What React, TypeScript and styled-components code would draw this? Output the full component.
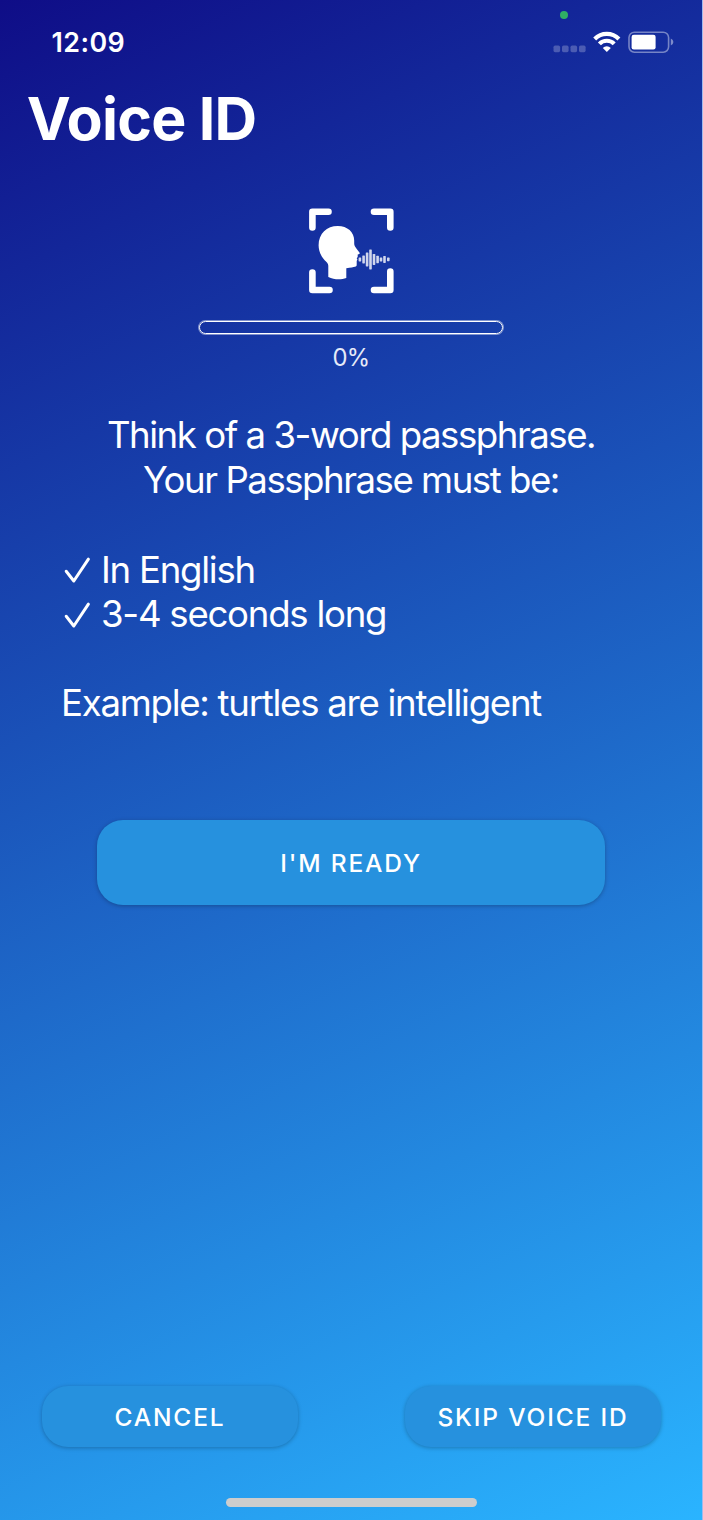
import React from "react";
import styled, { createGlobalStyle } from "styled-components";

const GlobalStyle = createGlobalStyle`
  *, *::before, *::after { box-sizing: border-box; }
  html, body { margin: 0; padding: 0; }
  body { font-family: Inter, "Liberation Sans", sans-serif; color: #fff; }
`;

const Screen = styled.main`
  width: 703px;
  height: 1520px;
  display: flex;
  flex-direction: column;
  overflow: hidden;
  border-right: 1px solid #9fb9ee;
  background: linear-gradient(155.2deg, #0f0d87 0%, #2ab4ff 100%);
  background-origin: border-box;
`;

const StatusBar = styled.header`
  position: relative;
  display: flex;
  justify-content: space-between;
  height: 84px;
  padding: 26px 28px 0 51.5px;
`;

const Clock = styled.time`
  font-size: 26.8px;
  line-height: 32px;
  font-weight: 580;
  letter-spacing: 0.45px;
`;

const CameraDot = styled.span`
  position: absolute;
  left: 560px;
  top: 11px;
  width: 8px;
  height: 8px;
  border-radius: 50%;
  background: #2fb065;
`;

const StatusIcons = styled.svg`
  display: block;
  width: 122px;
  height: 30px;
`;

const Title = styled.h1`
  margin: 0 0 54px 26.8px;
  font-size: 59px;
  line-height: 70px;
  font-weight: 700;
  letter-spacing: -0.75px;
  white-space: nowrap;
`;

const Enrollment = styled.section`
  display: flex;
  flex-direction: column;
  align-items: center;
`;

const VoiceIcon = styled.svg`
  display: block;
  width: 86px;
  height: 86px;
  margin-bottom: 27px;
`;

const ProgressTrack = styled.div`
  width: 304px;
  height: 13px;
  border: 1px solid #fff;
  border-radius: 6.5px;
  box-shadow: 0 0 0 1px rgba(255, 255, 255, 0.45);
`;

const ProgressFill = styled.div`
  height: 100%;
  border-radius: 5px;
  background: #fff;
`;

const ProgressLabel = styled.div`
  margin-top: 9px;
  font-size: 23.8px;
  line-height: 30px;
  letter-spacing: -0.8px;
  color: #e6eaf8;
`;

const Instructions = styled.section`
  margin: 40px 61px 0;
  font-size: 36.6px;
  line-height: 44.67px;
  white-space: nowrap;
`;

const Line = styled.p<{ $spacing: number; $center?: boolean }>`
  margin: 0;
  letter-spacing: ${(p) => p.$spacing}px;
  text-align: ${(p) => (p.$center ? "center" : "left")};
`;

const Checklist = styled.ul`
  list-style: none;
  margin: 45.2px 0 44.2px;
  padding: 0;
`;

const CheckItem = styled.li<{ $spacing: number }>`
  display: flex;
  align-items: center;
  gap: 10.5px;
  padding-left: 2.5px;
  letter-spacing: ${(p) => p.$spacing}px;
`;

const CheckIcon = styled.svg`
  display: block;
  width: 27px;
  height: 28px;
`;

const Button = styled.button<{ $large?: boolean }>`
  display: flex;
  align-items: center;
  justify-content: center;
  width: ${(p) => (p.$large ? 508 : 256)}px;
  height: ${(p) => (p.$large ? 85 : 61)}px;
  padding: 0;
  border: 0;
  border-radius: 26px;
  background: #2691de;
  box-shadow: 0 1px 4px rgba(0, 0, 0, 0.26);
  color: #fff;
  font: 450 24.5px/30px Inter, "Liberation Sans", sans-serif;
  letter-spacing: 1.85px;
  white-space: nowrap;
`;

const ReadyRow = styled.div`
  display: flex;
  justify-content: center;
  margin-top: 94.5px;
`;

const Footer = styled.footer`
  display: flex;
  justify-content: space-between;
  margin-top: auto;
  padding: 0 41px 0 42px;
`;

const HomeIndicator = styled.div`
  width: 251px;
  height: 8.5px;
  margin: 51px auto 13.5px;
  border-radius: 5px;
  background: #cdcdcd;
`;

const Check = () => (
  <CheckIcon viewBox="0 0 27 28" fill="none" stroke="#fff" strokeWidth="3" strokeLinecap="round" strokeLinejoin="round">
    <path d="M2.2 15.3 L9.8 25 L24.4 3.2" />
  </CheckIcon>
);

const waveBars: [number, number][] = [
  [51.9, 4], [55.6, 8], [59.1, 14], [62.5, 20], [66, 11], [69.6, 7.5], [73, 4], [76.5, 7], [80.3, 3.6],
];

export default function App() {
  const progress = 0;
  return (
    <>
      <GlobalStyle />
      <Screen>
        <StatusBar>
          <Clock>12:09</Clock>
          <CameraDot />
          <StatusIcons viewBox="552 26 122 30" fill="none">
            <g fill="#fff" fillOpacity="0.24">
              <rect x="553.5" y="45.6" width="6.6" height="6.6" rx="1.6" />
              <rect x="562" y="45.6" width="6.6" height="6.6" rx="1.6" />
              <rect x="570.5" y="45.6" width="6.6" height="6.6" rx="1.6" />
              <rect x="579" y="45.6" width="6.6" height="6.6" rx="1.6" />
            </g>
            <g stroke="#fff" strokeWidth="4.2">
              <path d="M594.7 38.9 A17.2 17.2 0 0 1 618.9 38.9" />
              <path d="M599.4 43.9 A10.3 10.3 0 0 1 614.2 43.9" />
            </g>
            <path d="M602.8 47.9 A5.9 5.9 0 0 1 610.8 47.9 L606.8 52 Z" fill="#fff" />
            <rect x="629" y="32.2" width="39.6" height="20" rx="5.4" stroke="#fff" strokeOpacity="0.42" strokeWidth="1.6" />
            <rect x="631.6" y="34.8" width="24" height="14.6" rx="2.2" fill="#fff" />
            <path d="M670.8 38.6 Q673.4 39.6 673.4 42.1 Q673.4 44.6 670.8 45.6 Z" fill="#fff" fillOpacity="0.45" />
          </StatusIcons>
        </StatusBar>

        <Title>Voice ID</Title>

        <Enrollment>
          <VoiceIcon viewBox="0 0 86 86" fill="none">
            <g stroke="#fff" strokeWidth="6.6" strokeLinecap="round" strokeLinejoin="round">
              <path d="M4.4 19.5 V3.8 H20.5" />
              <path d="M66 3.8 H82.3 V19.5" />
              <path d="M4.4 64.5 V82 H21.5" />
              <path d="M66 82 H82.3 V63.5" />
            </g>
            <path
              fill="#fff"
              d="M20.3 67 V58 C20.3 56.5 19.8 55.6 18.5 54 C13.5 49.5 10.6 43.5 10.6 37.3 C10.6 25.5 18.8 17.9 29.8 17.9 C39.5 17.9 46.2 24 46.2 32.5 V35.5 C46.2 37.5 47 38.6 48.2 40.2 L51.6 44.8 C52 45.7 51.3 46.3 49.7 46.6 V49 L48.7 50.2 L49.4 51.4 L48.7 53 V56.8 C48.7 58.8 47.5 59.1 38.3 60.2 V70 C33 72 26 71.8 20.3 69 Z"
            />
            <g fill="#fff" fillOpacity="0.8">
              {waveBars.map(([x, h]) => (
                <rect key={x} x={x - 1.3} y={51.4 - h / 2} width="2.6" height={h} rx="0.6" />
              ))}
            </g>
          </VoiceIcon>
          <ProgressTrack>
            <ProgressFill style={{ width: `${progress}%` }} />
          </ProgressTrack>
          <ProgressLabel>{progress}%</ProgressLabel>
        </Enrollment>

        <Instructions>
          <Line $center $spacing={-1.46}>Think of a 3-word passphrase.</Line>
          <Line $center $spacing={-1.46}>Your Passphrase must be:</Line>
          <Checklist>
            <CheckItem $spacing={-1.25}><Check />In English</CheckItem>
            <CheckItem $spacing={-1.25}><Check />3-4 seconds long</CheckItem>
          </Checklist>
          <Line $spacing={-1.26}>Example: turtles are intelligent</Line>
        </Instructions>

        <ReadyRow>
          <Button $large>I'M READY</Button>
        </ReadyRow>

        <Footer>
          <Button>CANCEL</Button>
          <Button>SKIP VOICE ID</Button>
        </Footer>
        <HomeIndicator />
      </Screen>
    </>
  );
}
